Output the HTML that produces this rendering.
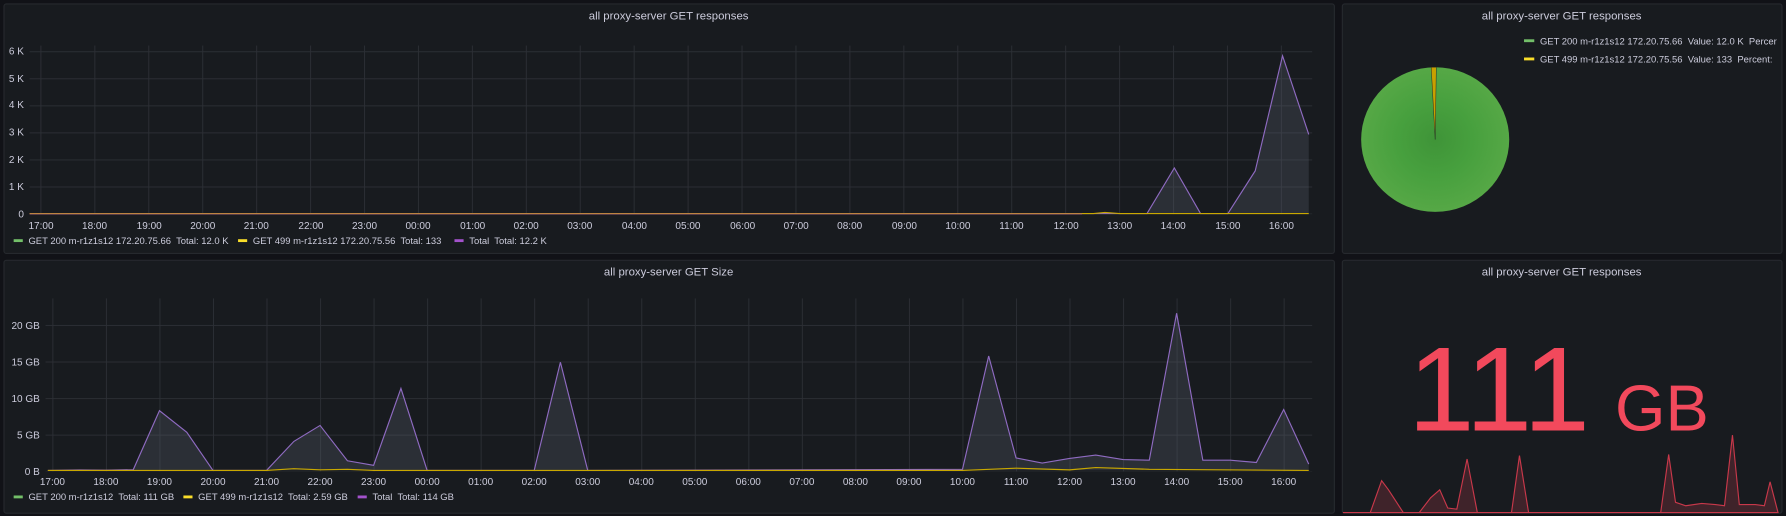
<!DOCTYPE html>
<html><head><meta charset="utf-8"><style>
html,body{margin:0;padding:0;background:#111217;overflow:hidden}
svg{display:block}
text{font-family:"Liberation Sans",sans-serif;fill:#ccccdc;white-space:pre}
</style></head><body>
<svg width="1786" height="516" viewBox="0 0 1568 453" preserveAspectRatio="none" xmlns="http://www.w3.org/2000/svg">
<defs>
<pattern id="vt" x="35.5" y="0" width="47.35" height="10" patternUnits="userSpaceOnUse"><rect x="0" y="0" width="0.8" height="10" fill="#2c2f35"/></pattern>
<pattern id="ht" x="0" y="45" width="10" height="23.75" patternUnits="userSpaceOnUse"><rect x="0" y="0" width="10" height="0.8" fill="#2c2f35"/></pattern>
<pattern id="vb" x="46" y="0" width="47.0" height="10" patternUnits="userSpaceOnUse"><rect x="0" y="0" width="0.8" height="10" fill="#2c2f35"/></pattern>
<pattern id="hb" x="0" y="285.3" width="10" height="32.1" patternUnits="userSpaceOnUse"><rect x="0" y="0" width="10" height="0.8" fill="#2c2f35"/></pattern>
<radialGradient id="pg" cx="0.5" cy="0.5" r="0.5"><stop offset="0" stop-color="#3f9438"/><stop offset="0.5" stop-color="#47a03e"/><stop offset="1" stop-color="#56a846"/></radialGradient>
</defs>
<rect width="1568" height="453" fill="#111217"/>
<rect x="3.5" y="3.5" width="1168" height="219" rx="2" fill="#181b1f" stroke="#26292e"/>
<rect x="1178.5" y="3.5" width="386" height="219" rx="2" fill="#181b1f" stroke="#26292e"/>
<rect x="3.5" y="228.5" width="1168" height="222" rx="2" fill="#181b1f" stroke="#26292e"/>
<rect x="1178.5" y="228.5" width="386" height="222" rx="2" fill="#181b1f" stroke="#26292e"/>

<text x="587" y="17" font-size="10" text-anchor="middle">all proxy-server GET responses</text>
<rect x="26" y="40" width="1126" height="148" fill="url(#vt)"/>
<rect x="26" y="40" width="1126" height="148" fill="url(#ht)"/>
<g font-size="8.8" text-anchor="end">
<text x="21" y="48">6 K</text><text x="21" y="72">5 K</text><text x="21" y="95">4 K</text><text x="21" y="119">3 K</text><text x="21" y="143">2 K</text><text x="21" y="167">1 K</text><text x="21" y="191">0</text>
</g>
<g font-size="8.8" text-anchor="middle">
<text x="36" y="201">17:00</text><text x="83" y="201">18:00</text><text x="131" y="201">19:00</text><text x="178" y="201">20:00</text><text x="225" y="201">21:00</text><text x="273" y="201">22:00</text><text x="320" y="201">23:00</text><text x="367" y="201">00:00</text><text x="415" y="201">01:00</text><text x="462" y="201">02:00</text><text x="509" y="201">03:00</text><text x="557" y="201">04:00</text><text x="604" y="201">05:00</text><text x="652" y="201">06:00</text><text x="699" y="201">07:00</text><text x="746" y="201">08:00</text><text x="794" y="201">09:00</text><text x="841" y="201">10:00</text><text x="888" y="201">11:00</text><text x="936" y="201">12:00</text><text x="983" y="201">13:00</text><text x="1030" y="201">14:00</text><text x="1078" y="201">15:00</text><text x="1125" y="201">16:00</text>
</g>
<path d="M26,187.5 L1007,187.5 L1031,147.5 L1054,187.5 L1078,187.5 L1102,150 L1126,49 L1149,118 L1149,187.5 Z" fill="rgba(90,95,110,0.3)"/>
<path d="M26,187.5 L1007,187.5 L1031,147.5 L1054,187.5 L1078,187.5 L1102,150 L1126,49 L1149,118" fill="none" stroke="#8f6bc2" stroke-width="1"/>
<path d="M26,187.5 L960,187.5 L970,186.5 L983,187.5 L1149,187.5" fill="none" stroke="#c9a800" stroke-width="1"/>
<path d="M26,187.8 L950,187.8" stroke="#b06080" stroke-width="0.8"/>
<g font-size="8.3">
<rect x="12" y="210" width="8" height="2.5" fill="#73bf69"/><text x="25" y="214">GET 200 m-r1z1s12 172.20.75.66  Total: 12.0 K</text>
<rect x="209" y="210" width="8" height="2.5" fill="#fade2a"/><text x="222" y="214">GET 499 m-r1z1s12 172.20.75.56  Total: 133</text>
<rect x="399" y="210" width="8" height="2.5" fill="#a352cc"/><text x="412" y="214">Total  Total: 12.2 K</text>
</g>

<text x="1371" y="17" font-size="10" text-anchor="middle">all proxy-server GET responses</text>
<ellipse cx="1260" cy="122.5" rx="65" ry="63.5" fill="url(#pg)"/>
<path d="M1260,122.5 L1256.5,59 L1261,59 Z" fill="#c9a000" stroke="#222" stroke-width="0.4"/>
<g font-size="8.3">
<rect x="1338" y="34.5" width="9" height="2.5" fill="#73bf69"/><text x="1352" y="39">GET 200 m-r1z1s12 172.20.75.66  Value: 12.0 K  Percer</text>
<rect x="1338" y="50.5" width="9" height="2.5" fill="#fade2a"/><text x="1352" y="55">GET 499 m-r1z1s12 172.20.75.56  Value: 133  Percent:</text>
</g>
<rect x="1565" y="0" width="3" height="453" fill="#111217"/>

<text x="587" y="242" font-size="10" text-anchor="middle">all proxy-server GET Size</text>
<rect x="40" y="262" width="1112" height="152" fill="url(#vb)"/>
<rect x="40" y="262" width="1112" height="152" fill="url(#hb)"/>
<g font-size="8.8" text-anchor="end">
<text x="35" y="289">20 GB</text><text x="35" y="321">15 GB</text><text x="35" y="353">10 GB</text><text x="35" y="385">5 GB</text><text x="35" y="417">0 B</text>
</g>
<g font-size="8.8" text-anchor="middle">
<text x="46" y="426">17:00</text><text x="93" y="426">18:00</text><text x="140" y="426">19:00</text><text x="187" y="426">20:00</text><text x="234" y="426">21:00</text><text x="281" y="426">22:00</text><text x="328" y="426">23:00</text><text x="375" y="426">00:00</text><text x="422" y="426">01:00</text><text x="469" y="426">02:00</text><text x="516" y="426">03:00</text><text x="563" y="426">04:00</text><text x="610" y="426">05:00</text><text x="657" y="426">06:00</text><text x="704" y="426">07:00</text><text x="751" y="426">08:00</text><text x="798" y="426">09:00</text><text x="845" y="426">10:00</text><text x="892" y="426">11:00</text><text x="939" y="426">12:00</text><text x="986" y="426">13:00</text><text x="1033" y="426">14:00</text><text x="1080" y="426">15:00</text><text x="1127" y="426">16:00</text>
</g>
<path d="M42,413 L70,412.6 L93,412.8 L117,412.3 L140,360.5 L164,379.5 L187,413 L234,413 L258,387.5 L281,373.5 L305,404.5 L328,408.5 L352,341 L375,413 L469,413 L492,318 L516,413 L845,412 L868,312.5 L892,402 L915,406.5 L939,402.5 L962,399.5 L986,403.5 L1009,404 L1033,275 L1056,404 L1080,404 L1103,406 L1127,359.5 L1149,407.5 L1149,413 L42,413 Z" fill="rgba(90,95,110,0.3)"/>
<path d="M42,413 L70,412.6 L93,412.8 L117,412.3 L140,360.5 L164,379.5 L187,413 L234,413 L258,387.5 L281,373.5 L305,404.5 L328,408.5 L352,341 L375,413 L469,413 L492,318 L516,413 L845,412 L868,312.5 L892,402 L915,406.5 L939,402.5 L962,399.5 L986,403.5 L1009,404 L1033,275 L1056,404 L1080,404 L1103,406 L1127,359.5 L1149,407.5" fill="none" stroke="#8f6bc2" stroke-width="1"/>
<path d="M42,413 L234,413 L258,411.5 L281,412.5 L305,412 L328,413 L845,413 L892,411 L939,412.5 L962,410.5 L1009,412 L1149,413" fill="none" stroke="#c9a800" stroke-width="1"/>
<g font-size="8.3">
<rect x="12" y="435" width="8" height="2.5" fill="#73bf69"/><text x="25" y="439">GET 200 m-r1z1s12  Total: 111 GB</text>
<rect x="161" y="435" width="8" height="2.5" fill="#fade2a"/><text x="174" y="439">GET 499 m-r1z1s12  Total: 2.59 GB</text>
<rect x="314" y="435" width="8" height="2.5" fill="#a352cc"/><text x="327" y="439">Total  Total: 114 GB</text>
</g>

<text x="1371" y="242" font-size="10" text-anchor="middle">all proxy-server GET responses</text>
<path d="M1179,450 L1203,450 L1213,422 L1219,430 L1232,450 L1246,450 L1256,437 L1264,430 L1271,446 L1279,447 L1288,403 L1297,450 L1327,450 L1334,400 L1342,450 L1458,450 L1465,399 L1471,441 L1480,444 L1494,442 L1506,443 L1514,444 L1521,382 L1527,443 L1541,443 L1549,444 L1554,423 L1561,450 Z" fill="rgba(242,73,92,0.18)" stroke="#c8384a" stroke-width="1"/>
<text x="1316" y="378" font-size="105" text-anchor="middle" style="fill:#f2495c">111</text>
<text x="1459" y="378" font-size="57" text-anchor="middle" style="fill:#f2495c">GB</text>
</svg>
</body></html>
